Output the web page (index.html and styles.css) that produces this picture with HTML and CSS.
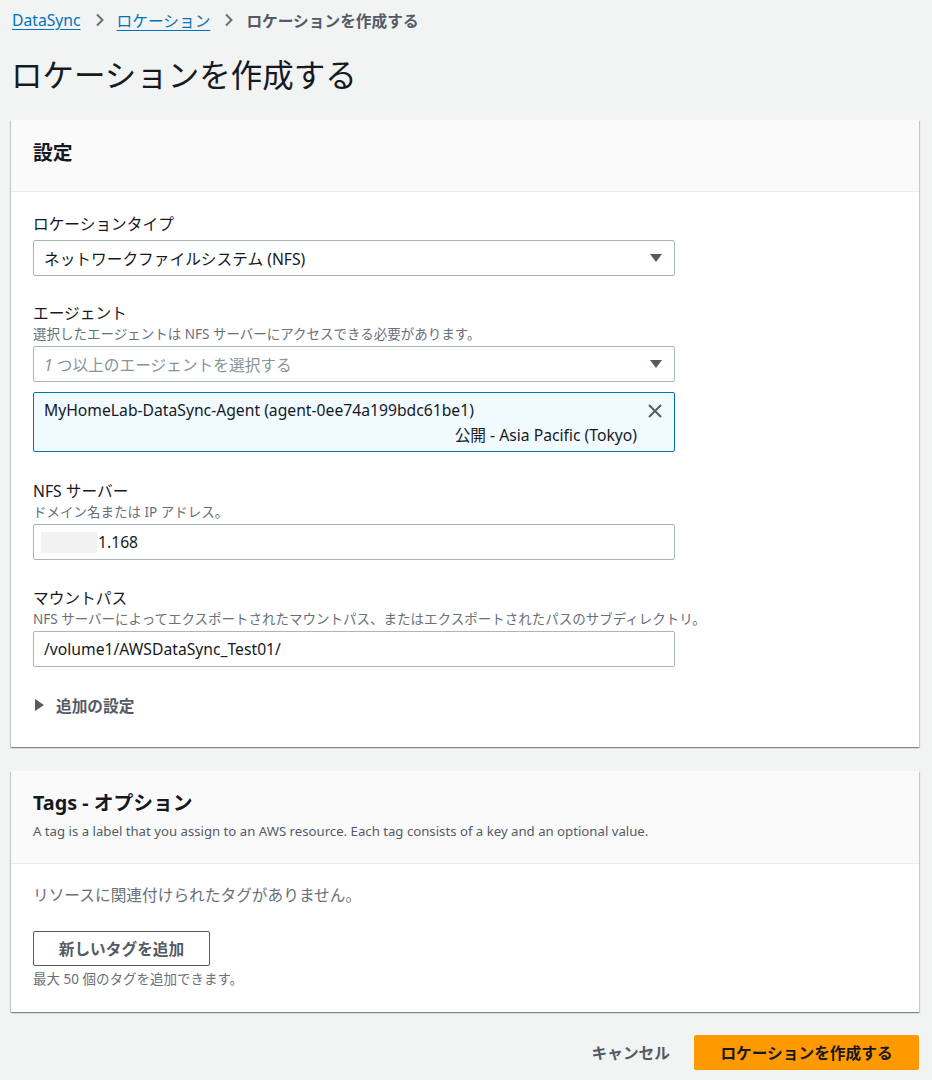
FILE: index.html
```html
<!DOCTYPE html>
<html lang="ja">
<head>
<meta charset="utf-8">
<title>ロケーションを作成する</title>
<link rel="stylesheet" href="styles.css">
</head>
<body>
<div class="page">
  <nav class="crumbs">
    <a class="crumb-link" href="#">DataSync</a>
    <svg class="chev" width="10" height="14" viewBox="0 0 10 14"><path d="M2 1.5 L7.5 7 L2 12.5" fill="none" stroke="#687078" stroke-width="2"/></svg>
    <a class="crumb-link" href="#">ロケーション</a>
    <svg class="chev" width="10" height="14" viewBox="0 0 10 14"><path d="M2 1.5 L7.5 7 L2 12.5" fill="none" stroke="#687078" stroke-width="2"/></svg>
    <span class="crumb-current">ロケーションを作成する</span>
  </nav>

  <h1 class="title">ロケーションを作成する</h1>

  <section class="card">
    <header class="card-head">
      <h2 class="card-title">設定</h2>
    </header>
    <div class="card-body">
      <div class="field">
        <div class="label">ロケーションタイプ</div>
        <div class="select first-control">
          <span class="select-text">ネットワークファイルシステム (NFS)</span>
          <span class="caret"></span>
        </div>
      </div>

      <div class="field">
        <div class="label">エージェント</div>
        <div class="desc">選択したエージェントは NFS サーバーにアクセスできる必要があります。</div>
        <div class="select">
          <span class="select-text placeholder"><i class="ph-num">1</i> つ以上のエージェントを選択する</span>
          <span class="caret"></span>
        </div>
        <div class="token">
          <div class="token-main">
            <div class="token-name">MyHomeLab-DataSync-Agent (agent-0ee74a199bdc61be1)</div>
            <div class="token-sub">公開 - Asia Pacific (Tokyo)</div>
          </div>
          <svg class="token-x" width="16" height="16" viewBox="0 0 16 16"><path d="M2 2 L14 14 M14 2 L2 14" stroke="#545b64" stroke-width="2" fill="none"/></svg>
        </div>
      </div>

      <div class="field">
        <div class="label">NFS サーバー</div>
        <div class="desc">ドメイン名または IP アドレス。</div>
        <div class="input">
          <span class="redact"></span><span class="input-text">1.168</span>
        </div>
      </div>

      <div class="field">
        <div class="label">マウントパス</div>
        <div class="desc">NFS サーバーによってエクスポートされたマウントパス、またはエクスポートされたパスのサブディレクトリ。</div>
        <div class="input">
          <span class="input-text">/volume1/AWSDataSync_Test01/</span>
        </div>
      </div>

      <div class="expand">
        <span class="expand-arrow"></span>
        <span class="expand-text">追加の設定</span>
      </div>
    </div>
  </section>

  <section class="card tags-card">
    <header class="card-head tags-head">
      <h2 class="card-title">Tags - オプション</h2>
      <div class="head-desc">A tag is a label that you assign to an AWS resource. Each tag consists of a key and an optional value.</div>
    </header>
    <div class="card-body tags-body">
      <div class="empty">リソースに関連付けられたタグがありません。</div>
      <button class="btn-normal" type="button">新しいタグを追加</button>
      <div class="hint">最大 50 個のタグを追加できます。</div>
    </div>
  </section>

  <div class="actions">
    <button class="btn-link" type="button">キャンセル</button>
    <button class="btn-primary" type="button">ロケーションを作成する</button>
  </div>
</div>
</body>
</html>
```

FILE: styles.css
```css
* { box-sizing: border-box; }

html, body {
  margin: 0;
  padding: 0;
  background: #f2f3f3;
}

body {
  font-family: "Noto Sans", "Noto Sans CJK JP", sans-serif;
  color: #16191f;
  font-size: 15.7px;
}

.page {
  padding: 8px 13px 0 11px;
}

.crumbs {
  display: flex;
  align-items: center;
  height: 24px;
  font-size: 15.7px;
  padding-left: 1px;
}

.crumb-link {
  color: #0073bb;
  text-decoration: underline;
  text-underline-offset: 3px;
}

.chev {
  margin: 0 12px 0 14px;
}

.crumb-current {
  color: #545b64;
  font-weight: 700;
}

.title {
  margin: 21px 0 23px 0;
  font-size: 31.5px;
  line-height: 44px;
  font-weight: 400;
  color: #16191f;
}

.card {
  background: #fff;
  box-shadow: 0 1px 1px 0 rgba(0,28,36,.3), 1px 1px 1px 0 rgba(0,28,36,.15), -1px 1px 1px 0 rgba(0,28,36,.15);
}

.card-head {
  background: #fafafa;
  border-bottom: 1px solid #eaeded;
  padding: 19px 22px 24px;
}

.card-title {
  margin: 0;
  font-size: 19.8px;
  line-height: 28px;
  font-weight: 700;
  color: #16191f;
}

.card-body {
  padding: 21px 22px 31px;
}

.field {
  display: flex;
  flex-direction: column;
  margin-bottom: 27px;
}

.field:first-child { margin-bottom: 26px; }

.label {
  line-height: 22px;
  color: #16191f;
}

.desc {
  margin-top: 1px;
  font-size: 13.5px;
  line-height: 18px;
  color: #687078;
}

.select, .input {
  margin-top: 3px;
  width: 642px;
  height: 36px;
  border: 1px solid #aab7b8;
  border-radius: 2px;
  background: #fff;
  display: flex;
  align-items: center;
  padding: 0 10px;
}

.select.first-control { margin-top: 5px; }

.select-text, .input-text {
  flex: 1;
  color: #16191f;
  white-space: nowrap;
}

.input-text { flex: 0 0 auto; }

.placeholder {
  color: #879596;
}

.ph-num { font-style: italic; }

.caret {
  width: 0;
  height: 0;
  border-left: 6px solid transparent;
  border-right: 6px solid transparent;
  border-top: 8px solid #545b64;
  margin-right: 2px;
}

.token {
  margin-top: 10px;
  margin-bottom: 1px;
  width: 642px;
  height: 60px;
  background: #f1faff;
  border: 1px solid #0073bb;
  border-radius: 2px;
  display: flex;
  align-items: flex-start;
  padding: 6px 10px 0 10px;
}

.token-main {
  flex: 1;
  display: flex;
  flex-direction: column;
}

.token-name { line-height: 23px; }

.token-sub {
  line-height: 27px;
  text-align: right;
  padding-right: 10px;
}

.token-x {
  margin-top: 4px;
  margin-right: 1px;
}

.redact {
  display: inline-block;
  width: 56px;
  height: 21px;
  background: #f2f2f2;
  margin-left: -3px;
  margin-right: 1px;
}

.expand {
  display: flex;
  align-items: center;
  height: 22px;
  margin-top: 6px;
  color: #545b64;
  font-weight: 700;
}

.expand-arrow {
  width: 0;
  height: 0;
  border-top: 6px solid transparent;
  border-bottom: 6px solid transparent;
  border-left: 9px solid #545b64;
  margin: 0 12px 0 2px;
}

.tags-card {
  margin-top: 24px;
}

.tags-head {
  padding: 18px 22px 23px;
}

.head-desc {
  margin-top: 5px;
  font-size: 13.2px;
  line-height: 18px;
  color: #545b64;
}

.tags-body {
  padding: 20px 22px 24px;
  display: flex;
  flex-direction: column;
  align-items: flex-start;
}

.empty {
  line-height: 22px;
  color: #687078;
}

.btn-normal {
  margin-top: 25px;
  height: 35px;
  width: 177px;
  font-family: inherit;
  font-size: 15.7px;
  font-weight: 700;
  color: #545b64;
  background: #fff;
  border: 1px solid #545b64;
  border-radius: 2px;
  padding: 0;
}

.hint {
  margin-top: 4px;
  font-size: 13.5px;
  line-height: 18px;
  color: #687078;
}

.actions {
  margin-top: 23px;
  display: flex;
  justify-content: flex-end;
  align-items: center;
  gap: 24px;
}

.btn-link {
  font-family: inherit;
  font-size: 15.7px;
  font-weight: 700;
  color: #545b64;
  background: transparent;
  border: none;
  padding: 0;
  height: 35px;
}

.btn-primary {
  font-family: inherit;
  font-size: 15.7px;
  font-weight: 700;
  color: #16191f;
  background: #ff9900;
  border: 1px solid #ff9900;
  border-radius: 2px;
  width: 225px;
  height: 35px;
  padding: 0;
}
```
